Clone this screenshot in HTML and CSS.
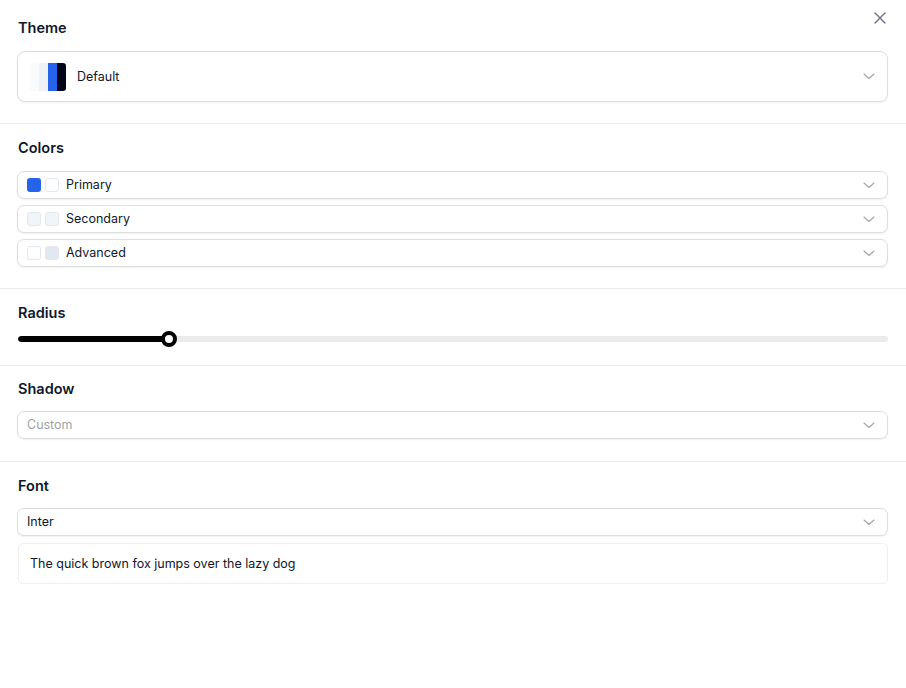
FILE: index.html
```html
<!DOCTYPE html>
<html lang="en">
<head>
<meta charset="utf-8">
<title>Theme customizer</title>
<link rel="stylesheet" href="styles.css">
</head>
<body>
<div class="panel">
  <button class="close" aria-label="Close">
    <svg width="12" height="12" viewBox="0 0 12 12"><path d="M1 1L11 11M11 1L1 11" stroke="#6b7280" stroke-width="1.4" stroke-linecap="round" fill="none"/></svg>
  </button>

  <section class="section section--first">
    <h2 class="title">Theme</h2>
    <div class="select select--theme">
      <div class="theme-swatch">
        <span class="stripe s1"></span><span class="stripe s2"></span><span class="stripe s3"></span><span class="stripe s4"></span>
      </div>
      <span class="label">Default</span>
      <svg class="chevron" width="12" height="7" viewBox="0 0 12 7"><path d="M1 1L6 5.5L11 1" stroke="#a3a3a3" stroke-width="1.1" fill="none" stroke-linecap="round" stroke-linejoin="round"/></svg>
    </div>
  </section>

  <section class="section">
    <h2 class="title">Colors</h2>
    <div class="rows">
      <div class="select">
        <span class="sw sw-blue"></span><span class="sw sw-white"></span>
        <span class="label label--row">Primary</span>
        <svg class="chevron" width="12" height="7" viewBox="0 0 12 7"><path d="M1 1L6 5.5L11 1" stroke="#a3a3a3" stroke-width="1.1" fill="none" stroke-linecap="round" stroke-linejoin="round"/></svg>
      </div>
      <div class="select">
        <span class="sw sw-slate"></span><span class="sw sw-slate"></span>
        <span class="label label--row">Secondary</span>
        <svg class="chevron" width="12" height="7" viewBox="0 0 12 7"><path d="M1 1L6 5.5L11 1" stroke="#a3a3a3" stroke-width="1.1" fill="none" stroke-linecap="round" stroke-linejoin="round"/></svg>
      </div>
      <div class="select">
        <span class="sw sw-white"></span><span class="sw sw-gray"></span>
        <span class="label label--row">Advanced</span>
        <svg class="chevron" width="12" height="7" viewBox="0 0 12 7"><path d="M1 1L6 5.5L11 1" stroke="#a3a3a3" stroke-width="1.1" fill="none" stroke-linecap="round" stroke-linejoin="round"/></svg>
      </div>
    </div>
  </section>

  <section class="section section--slider">
    <h2 class="title title--tight">Radius</h2>
    <div class="slider">
      <div class="track">
        <div class="fill" style="width: 17.3%"></div>
      </div>
      <div class="thumb" style="left: 17.3%"></div>
    </div>
  </section>

  <section class="section section--shadow">
    <h2 class="title title--shadow">Shadow</h2>
    <div class="select">
      <span class="label label--placeholder">Custom</span>
      <svg class="chevron" width="12" height="7" viewBox="0 0 12 7"><path d="M1 1L6 5.5L11 1" stroke="#a3a3a3" stroke-width="1.1" fill="none" stroke-linecap="round" stroke-linejoin="round"/></svg>
    </div>
  </section>

  <section class="section section--last">
    <h2 class="title title--font">Font</h2>
    <div class="select">
      <span class="label label--plain">Inter</span>
      <svg class="chevron" width="12" height="7" viewBox="0 0 12 7"><path d="M1 1L6 5.5L11 1" stroke="#a3a3a3" stroke-width="1.1" fill="none" stroke-linecap="round" stroke-linejoin="round"/></svg>
    </div>
    <div class="preview">The quick brown fox jumps over the lazy dog</div>
  </section>
</div>
</body>
</html>
```

FILE: styles.css
```css
* { box-sizing: border-box; }

html, body {
  margin: 0;
  padding: 0;
  background: #ffffff;
}

body {
  font-family: Inter, "Noto Sans", "Liberation Sans", sans-serif;
  color: #0f172a;
  width: 906px;
  height: 688px;
}

.panel {
  position: relative;
  width: 906px;
}

.close {
  position: absolute;
  top: 12px;
  right: 20px;
  width: 12px;
  height: 12px;
  padding: 0;
  border: 0;
  background: transparent;
  display: flex;
  align-items: center;
  justify-content: center;
}

.section {
  padding: 14px 18px 21px 17px;
  border-bottom: 1px solid #ebebeb;
}

.section--first {
  padding-top: 18px;
}

.section--slider {
  padding-bottom: 18px;
}

.section--shadow {
  padding-top: 13px;
  padding-bottom: 22px;
}

.section--last {
  border-bottom: 0;
}

.title {
  margin: 0 0 13px 1px;
  font-size: 14.5px;
  line-height: 20px;
  font-weight: 600;
  color: #0f172a;
}

.title--tight { margin-bottom: 8px; }
.title--shadow { margin-bottom: 12px; }
.title--font { margin-bottom: 12px; }

.rows {
  display: flex;
  flex-direction: column;
  gap: 6px;
}

.select {
  display: flex;
  align-items: center;
  height: 28px;
  border: 1px solid #dedede;
  border-radius: 7px;
  box-shadow: 0 1px 2px rgba(0, 0, 0, 0.06);
  padding: 0 12px 0 9px;
  background: #fff;
}

.select--theme {
  height: 51px;
  border-radius: 8px;
  padding-left: 12px;
}

.theme-swatch {
  display: flex;
  width: 36px;
  height: 28px;
  border-radius: 3px;
  overflow: hidden;
  margin-right: 11px;
}

.stripe { flex: 1; height: 100%; }
.s1 { background: #f8fafc; }
.s2 { background: #eef2f7; }
.s3 { background: #2563eb; }
.s4 { background: #020617; }

.sw {
  width: 14px;
  height: 14px;
  border-radius: 3px;
  margin-right: 4px;
  flex: none;
}

.sw-blue { background: #2563eb; }
.sw-white { background: #ffffff; border: 1px solid #e2e8f0; }
.sw-slate { background: #f1f5f9; border: 1px solid #e2e8f0; }
.sw-gray { background: #e2e8f0; border: 1px solid #e2e8f0; }

.label {
  font-size: 12.5px;
  line-height: 16px;
  color: #0f172a;
  flex: 1;
}

.label--row { margin-left: 3px; }
.label--plain { margin-left: 0; }
.label--placeholder { color: #a3a3a3; }

.chevron { flex: none; }

.slider {
  position: relative;
  height: 16px;
  margin-left: 1px;
  display: flex;
  align-items: center;
}

.track {
  width: 100%;
  height: 6px;
  border-radius: 3px;
  background: #ebebeb;
  overflow: hidden;
}

.fill {
  height: 100%;
  background: #000;
  border-radius: 3px;
}

.thumb {
  position: absolute;
  top: 0;
  width: 16px;
  height: 16px;
  margin-left: -8px;
  border: 4px solid #000;
  border-radius: 50%;
  background: #fff;
}

.preview {
  margin-top: 7px;
  margin-left: 1px;
  height: 41px;
  border: 1px solid #efefef;
  border-radius: 5px;
  padding: 0 11px;
  display: flex;
  align-items: center;
  font-size: 12.5px;
  color: #0f172a;
}
```
